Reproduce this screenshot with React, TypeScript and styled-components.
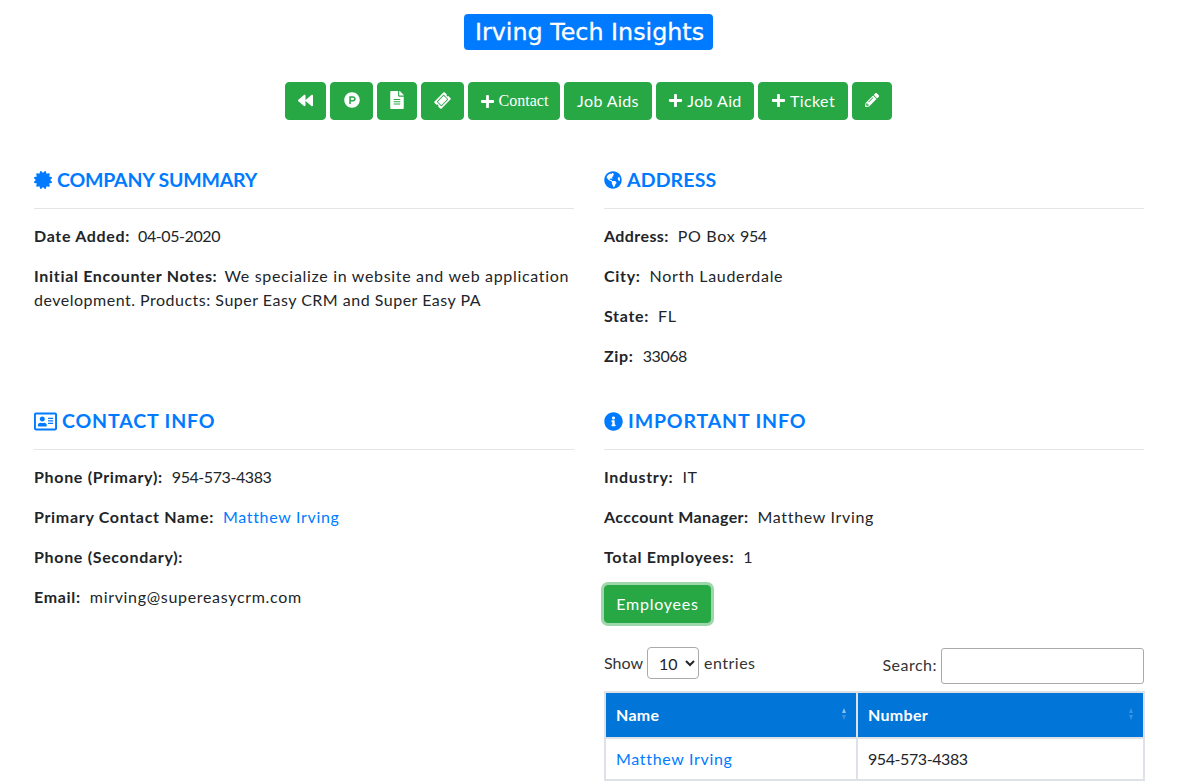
import React from 'react';
import styled, { createGlobalStyle } from 'styled-components';
import {
  FaBackward,
  FaCertificate,
  FaFileAlt,
  FaGlobeAmericas,
  FaInfoCircle,
  FaPencilAlt,
  FaPlus,
  FaProductHunt,
  FaRegAddressCard,
  FaTicketAlt,
} from 'react-icons/fa';

const GlobalStyle = createGlobalStyle`
  html, body {
    margin: 0;
    padding: 0;
    overflow: hidden;
    background: #fff;
  }
  body {
    font-family: 'Lato', 'Noto Sans', sans-serif;
    font-size: 16px;
    line-height: 1.5;
    color: #212529;
  }
`;

const Page = styled.div`
  width: 1140px;
  height: 782px;
  margin-left: 19px;
  overflow: hidden;
`;

const TitleRow = styled.div`
  display: flex;
  justify-content: center;
  padding: 14px 1px 0 0;
`;

const Title = styled.h1`
  margin: 0;
  padding: 0 9px 0 11px;
  height: 36px;
  line-height: 36px;
  background: #007bff;
  border-radius: 4px;
  color: #fff;
  font-family: 'DejaVu Sans', sans-serif;
  font-size: 23.8px;
  font-weight: 400;
  -webkit-text-stroke: 0.3px #fff;
`;

const Toolbar = styled.div`
  display: flex;
  justify-content: center;
  gap: 4px;
  margin-top: 32px;
  padding-right: 1px;
`;

const GreenButton = styled.button<{ $serif?: boolean; $w: number }>`
  display: inline-flex;
  align-items: center;
  justify-content: center;
  gap: 4px;
  width: ${(p) => p.$w}px;
  height: 38px;
  padding: 0 0 ${(p) => (p.$serif ? 0 : 2)}px;
  border: 1px solid #28a745;
  border-radius: 4px;
  background: #28a745;
  color: #fff;
  font-family: ${(p) => (p.$serif ? "'Liberation Serif', serif" : 'inherit')};
  font-size: 16px;
  letter-spacing: ${(p) => (p.$serif ? 0 : 0.4)}px;
  svg {
    font-size: 15px;
    flex-shrink: 0;
  }
`;

const Columns = styled.div`
  display: grid;
  grid-template-columns: 540px 540px;
  column-gap: 30px;
  padding: 48px 15px 0;
`;

const Section = styled.section<{ $h?: number }>`
  min-width: 0;
  height: ${(p) => (p.$h ? `${p.$h}px` : 'auto')};
`;

const Heading = styled.h4<{ $spacing: number }>`
  display: flex;
  align-items: center;
  gap: 5px;
  margin: 0;
  height: 24px;
  color: #007bff;
  font-size: 19.5px;
  font-weight: 700;
  line-height: 24px;
  letter-spacing: ${(p) => p.$spacing}px;
  svg {
    font-size: 18px;
    flex-shrink: 0;
  }
`;

const Rule = styled.hr`
  margin: 16px 0 15px;
  border: 0;
  border-top: 1px solid #e3e5e8;
`;

const Line = styled.p`
  margin: 0 0 16px;
  letter-spacing: 0.68px;
`;

const Label = styled.b<{ $tight?: boolean; $gap?: number }>`
  font-weight: 700;
  margin-right: ${(p) => p.$gap ?? 9}px;
  letter-spacing: ${(p) => (p.$tight ? 0.4 : 0.68)}px;
`;

const Num = styled.span`
  letter-spacing: -0.42px;
`;

const Loose = styled.span`
  letter-spacing: 0.5px;
`;

const TextLink = styled.a`
  color: #007bff;
  text-decoration: none;
`;

const EmployeesButton = styled.button`
  display: block;
  width: 107px;
  height: 38px;
  margin-top: 1px;
  padding: 0 0 2px;
  border: 1px solid #28a745;
  border-radius: 4px;
  background: #28a745;
  color: #fff;
  font-family: inherit;
  font-size: 16px;
  letter-spacing: 0.75px;
  box-shadow: 0 0 0 3px rgba(40, 167, 69, 0.45);
`;

const TableControls = styled.div`
  display: flex;
  justify-content: space-between;
  align-items: flex-start;
  margin-top: 24px;
  height: 44px;
  color: #333;
  letter-spacing: 0.5px;
`;

const ShowLabel = styled.label`
  display: flex;
  align-items: center;
  gap: 4px;
  span {
    letter-spacing: 0;
  }
`;

const Select = styled.select`
  width: 52px;
  height: 32px;
  margin-right: 1px;
  padding: 0 4px 0 7px;
  border: 1px solid #aaa;
  border-radius: 4px;
  background: #fff;
  color: #212529;
  font-family: inherit;
  font-size: 16px;
`;

const SearchLabel = styled.label`
  display: flex;
  align-items: center;
  gap: 4px;
  margin-top: 1px;
  span {
    margin-top: -2px;
  }
`;

const SearchInput = styled.input`
  box-sizing: border-box;
  width: 203px;
  height: 36px;
  padding: 0 5px;
  border: 1px solid #aaa;
  border-radius: 3px;
`;

const Table = styled.table`
  width: 539px;
  border-collapse: collapse;
  table-layout: fixed;
`;

const Th = styled.th<{ $w: number }>`
  position: relative;
  box-sizing: border-box;
  width: ${(p) => p.$w}px;
  height: 46px;
  padding: 0 10px 1px;
  border: 2px solid #dee2e6;
  background: #0275d8;
  color: #fff;
  font-weight: 700;
  letter-spacing: 0.3px;
  text-align: left;
`;

const SortArrows = styled.span<{ $active?: boolean }>`
  position: absolute;
  top: 15px;
  right: 10px;
  display: flex;
  flex-direction: column;
  gap: 2px;
  i {
    display: block;
    width: 0;
    height: 0;
    border-left: 2.5px solid transparent;
    border-right: 2.5px solid transparent;
  }
  i:first-child {
    border-bottom: 5px solid rgba(255, 255, 255, ${(p) => (p.$active ? 0.55 : 0.22)});
  }
  i:last-child {
    border-top: 5px solid rgba(255, 255, 255, 0.22);
  }
`;

const Td = styled.td`
  box-sizing: border-box;
  height: 42px;
  padding: 0 10px 1px;
  border: 2px solid #dee2e6;
  letter-spacing: 0.68px;
`;

const TOOLBAR = [
  { w: 41, icon: <FaBackward /> },
  { w: 43, icon: <FaProductHunt style={{ fontSize: 16 }} /> },
  { w: 40, icon: <FaFileAlt style={{ fontSize: 18 }} /> },
  { w: 43, icon: <FaTicketAlt style={{ transform: 'rotate(-45deg)' }} /> },
  { w: 92, icon: <FaPlus />, text: 'Contact', serif: true },
  { w: 88, text: 'Job Aids' },
  { w: 98, icon: <FaPlus />, text: 'Job Aid' },
  { w: 90, icon: <FaPlus />, text: 'Ticket' },
  { w: 40, icon: <FaPencilAlt style={{ fontSize: 14 }} /> },
];

export default function App() {
  return (
    <Page>
      <GlobalStyle />
      <TitleRow>
        <Title>Irving Tech Insights</Title>
      </TitleRow>
      <Toolbar>
        {TOOLBAR.map((b, i) => (
          <GreenButton key={i} $w={b.w} $serif={b.serif}>
            {b.icon}
            {b.text}
          </GreenButton>
        ))}
      </Toolbar>
      <Columns>
        <Section $h={241}>
          <Heading $spacing={-0.19}>
            <FaCertificate />
            COMPANY SUMMARY
          </Heading>
          <Rule />
          <Line>
            <Label $gap={8}>Date Added:</Label>
            <Num>04-05-2020</Num>
          </Line>
          <Line>
            <Label $gap={7}>Initial Encounter Notes:</Label>We specialize in website and web application{' '}
            <Loose>development. Products: Super Easy CRM and Super Easy PA</Loose>
          </Line>
        </Section>
        <Section $h={241}>
          <Heading $spacing={0.14}>
            <FaGlobeAmericas />
            ADDRESS
          </Heading>
          <Rule />
          <Line>
            <Label $tight>Address:</Label>PO Box <Num>954</Num>
          </Line>
          <Line>
            <Label>City:</Label>North Lauderdale
          </Line>
          <Line>
            <Label>State:</Label>FL
          </Line>
          <Line>
            <Label>Zip:</Label>
            <Num>33068</Num>
          </Line>
        </Section>
        <Section>
          <Heading $spacing={0.87}>
            <FaRegAddressCard style={{ fontSize: 23 }} />
            CONTACT INFO
          </Heading>
          <Rule />
          <Line>
            <Label>Phone (Primary):</Label>
            <Num>954-573-4383</Num>
          </Line>
          <Line>
            <Label>Primary Contact Name:</Label>
            <TextLink href="#">Matthew Irving</TextLink>
          </Line>
          <Line>
            <Label>Phone (Secondary):</Label>
          </Line>
          <Line>
            <Label>Email:</Label>mirving@supereasycrm.com
          </Line>
        </Section>
        <Section>
          <Heading $spacing={0.85}>
            <FaInfoCircle style={{ fontSize: 19 }} />
            IMPORTANT INFO
          </Heading>
          <Rule />
          <Line>
            <Label>Industry:</Label>IT
          </Line>
          <Line>
            <Label $tight>Acccount Manager:</Label>Matthew Irving
          </Line>
          <Line>
            <Label>Total Employees:</Label>1
          </Line>
          <EmployeesButton>Employees</EmployeesButton>
          <TableControls>
            <ShowLabel>
              <span>Show</span>
              <Select defaultValue="10">
                <option>10</option>
                <option>25</option>
                <option>50</option>
                <option>100</option>
              </Select>
              entries
            </ShowLabel>
            <SearchLabel>
              <span>Search:</span>
              <SearchInput />
            </SearchLabel>
          </TableControls>
          <Table>
            <thead>
              <tr>
                <Th $w={252}>
                  Name
                  <SortArrows $active>
                    <i />
                    <i />
                  </SortArrows>
                </Th>
                <Th $w={287}>
                  Number
                  <SortArrows>
                    <i />
                    <i />
                  </SortArrows>
                </Th>
              </tr>
            </thead>
            <tbody>
              <tr>
                <Td>
                  <TextLink href="#">Matthew Irving</TextLink>
                </Td>
                <Td>
                  <Num>954-573-4383</Num>
                </Td>
              </tr>
            </tbody>
          </Table>
        </Section>
      </Columns>
    </Page>
  );
}
